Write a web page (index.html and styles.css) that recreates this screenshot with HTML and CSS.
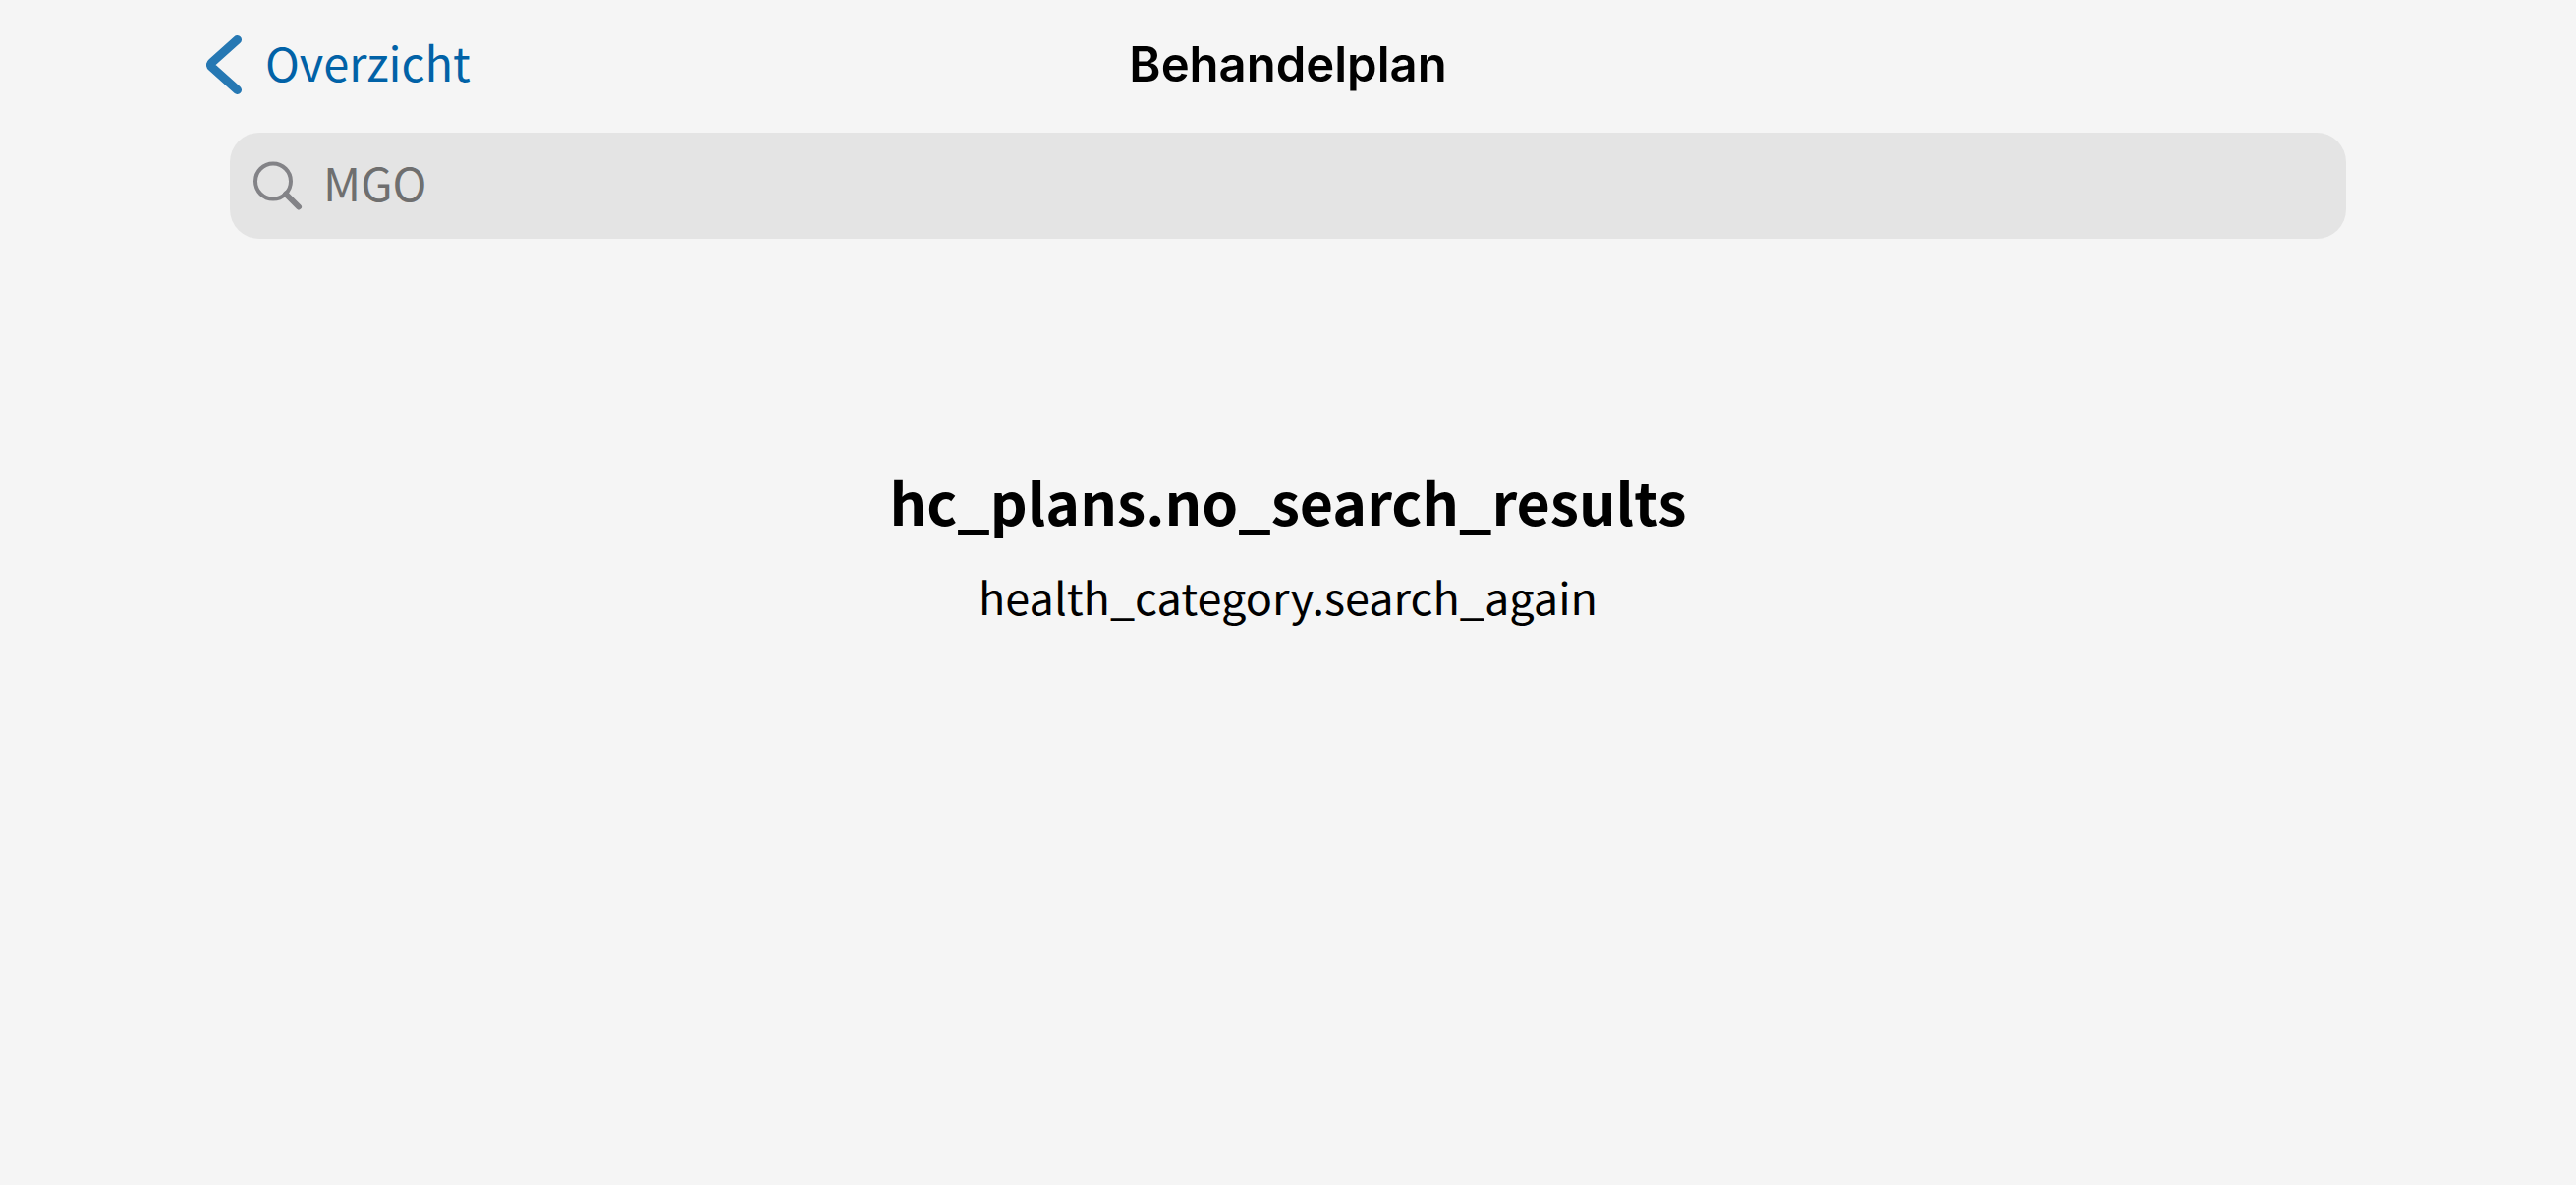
FILE: index.html
```html
<!DOCTYPE html>
<html lang="nl">
<head>
<meta charset="utf-8">
<meta name="viewport" content="width=device-width, initial-scale=1">
<title>Behandelplan</title>
<link rel="stylesheet" href="styles.css">
</head>
<body>
<header class="navbar">
  <a class="back" href="#overzicht">
    <svg class="back-icon" viewBox="0 0 36 60" aria-hidden="true"><path d="M31.500 4.500 5.800 27.500Q3 30 5.800 32.500L31.500 55.500"/></svg>
    <span class="back-label">Overzicht</span>
  </a>
  <h1 class="title">Behandelplan</h1>
</header>
<main class="content">
  <form class="search" role="search">
    <svg class="search-icon" viewBox="0 0 49 49" aria-hidden="true"><circle cx="20" cy="19.500" r="18"/><path class="handle" d="M33 32.500 46 45.500"/></svg>
    <input class="search-input" type="search" aria-label="Zoeken" value="MGO">
  </form>
  <section class="empty">
    <h2 class="empty-title">hc_plans.no_search_results</h2>
    <p class="empty-text">health_category.search_again</p>
  </section>
</main>
</body>
</html>
```
FILE: styles.css
```css
* {
  box-sizing: border-box;
}

body {
  margin: 0;
  background: #f5f5f5;
  color: #000;
  font-family: "Noto Sans CJK SC", "Noto Sans", sans-serif;
  font-size: 47px;
  line-height: 72px;
}

.navbar {
  display: grid;
  grid-template-columns: 1fr auto 1fr;
  align-items: center;
  height: 132px;
  margin-bottom: 3px;
  padding: 0 210px;
}

.back {
  display: flex;
  align-items: center;
  gap: 24px;
  color: #0162a7;
  text-decoration: none;
}

.back-icon {
  width: 36px;
  height: 60px;
  fill: none;
  stroke: #2678b3;
  stroke-width: 9;
  stroke-linecap: round;
  stroke-linejoin: round;
}

.back-label {
  padding-bottom: 6px;
}

.title {
  margin: 0;
  font-family: Inter, sans-serif;
  font-size: 49px;
  font-weight: 600;
}

.search {
  display: flex;
  align-items: center;
  gap: 22px;
  height: 108px;
  margin: 0 234px;
  padding: 0 24px;
  border-radius: 30px;
  background: #e4e4e4;
}

.search-icon {
  flex: none;
  width: 49px;
  height: 49px;
  overflow: visible;
  fill: none;
  stroke: #838387;
  stroke-width: 4;
  stroke-linecap: round;
}

.handle {
  stroke-width: 6;
}

.search-input {
  flex: 1;
  min-width: 0;
  padding: 0 0 8px;
  border: 0;
  outline: 0;
  appearance: none;
  background: none;
  color: #6f6f6f;
  font: inherit;
}

.empty {
  padding: 222px 24px 0;
  text-align: center;
}

.empty-title {
  margin: 0 0 16px;
  font-size: 59px;
  font-weight: 700;
  line-height: 90px;
}

.empty-text {
  margin: 0;
  font-size: 45px;
}
```
